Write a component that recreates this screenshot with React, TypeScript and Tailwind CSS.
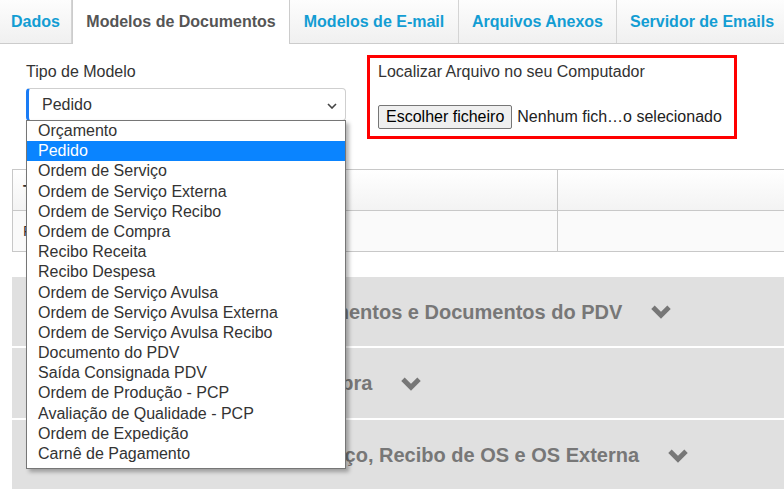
import React from 'react';

const tabs = [
    { label: 'Dados', w: 'w-[72px]', active: false },
    { label: 'Modelos de Documentos', w: 'w-[218px]', active: true },
    { label: 'Modelos de E-mail', w: 'w-[169px]', active: false },
    { label: 'Arquivos Anexos', w: 'w-[158px]', active: false },
    { label: 'Servidor de Emails', w: 'w-[170px]', active: false },
];

const opcoes = [
    'Orçamento',
    'Pedido',
    'Ordem de Serviço',
    'Ordem de Serviço Externa',
    'Ordem de Serviço Recibo',
    'Ordem de Compra',
    'Recibo Receita',
    'Recibo Despesa',
    'Ordem de Serviço Avulsa',
    'Ordem de Serviço Avulsa Externa',
    'Ordem de Serviço Avulsa Recibo',
    'Documento do PDV',
    'Saída Consignada PDV',
    'Ordem de Produção - PCP',
    'Avaliação de Qualidade - PCP',
    'Ordem de Expedição',
    'Carnê de Pagamento',
];

const secoes = [
    { titulo: 'Modelos de Orçamentos, Pagamentos e Documentos do PDV', h: 'h-[69px]' },
    { titulo: 'Modelos dos Recibos e de Compra', h: 'h-[70px]' },
    { titulo: 'Modelo para as Ordens de Serviço, Recibo de OS e OS Externa', h: 'h-[70px]' },
];

function Chevron({ className }: { className?: string }) {
    return (
        <svg viewBox="0 0 20 14" className={className} fill="none">
            <path d="M2.5 3 L10 10.5 L17.5 3" stroke="#777777" strokeWidth="4.5" strokeLinejoin="miter" />
        </svg>
    );
}

export default function App() {
    return (
        <div className="relative w-[784px] h-[489px] overflow-hidden bg-white text-[#333] font-['Liberation_Sans',Arial,sans-serif]">
            {/* Abas */}
            <div className="flex h-[44px] border-b border-[#cccccc] shadow-[inset_0_3px_3px_-2px_rgba(0,0,0,0.12)]">
                {tabs.map((t) => (
                    <div
                        key={t.label}
                        className={
                            t.active
                                ? `${t.w} shrink-0 flex items-center justify-center bg-white border-x border-[#cccccc] -mb-px text-[16px] font-bold text-[#555]`
                                : `${t.w} shrink-0 flex items-center justify-center bg-gradient-to-b from-[#fdfdfd] to-[#f0f0f0] border-r border-[#d4d4d4] last:border-r-0 text-[16px] font-bold text-[#139dd3]`
                        }
                    >
                        {t.label}
                    </div>
                ))}
            </div>

            <div className="pl-[12px]">
                {/* Linha superior */}
                <div className="flex items-start">
                    <div className="ml-[14px] w-[320px] pt-[18px]">
                        <div className="text-[16px] leading-[20px] text-[#333]">Tipo de Modelo</div>
                        <div className="relative mt-[6px] h-[33px] rounded-[4px] border border-[#cfcfcf] border-l-[3px] border-l-[#1a7cf5] flex items-center pl-[13px] text-[16px] text-[#333]">
                            Pedido
                            <svg viewBox="0 0 10 6" className="absolute right-[8px] top-[14px] w-[10px] h-[6px]" fill="none">
                                <path d="M1 1 L5 5 L9 1" stroke="#444" strokeWidth="1.6" />
                            </svg>
                        </div>
                    </div>
                    <div className="ml-[21px] mt-[11px] w-[370px] h-[84px] border-[3px] border-[#ff0000] pl-[8px] pt-[4px]">
                        <div className="text-[16px] leading-[20px] text-[#333]">Localizar Arquivo no seu Computador</div>
                        <div className="mt-[23px] flex items-center text-[16px]">
                            <div className="h-[24px] px-[7px] flex items-center bg-[#efefef] border border-[#767676] rounded-[2px] text-black">
                                Escolher ficheiro
                            </div>
                            <span className="ml-[5px] text-[#222]">Nenhum fich…o selecionado</span>
                        </div>
                    </div>
                </div>

                {/* Tabela */}
                <div className="mt-[30px] w-[790px] border border-[#c8c8c8] text-[15px]">
                    <div className="flex h-[41px] bg-gradient-to-b from-white to-[#f3f3f3] border-b border-[#c8c8c8]">
                        <div className="w-[545px] border-r border-[#c8c8c8] flex items-center pl-[10px] font-bold">Tipo</div>
                        <div className="flex-1" />
                    </div>
                    <div className="flex h-[40px] bg-[#fafafa]">
                        <div className="w-[545px] border-r border-[#c8c8c8] flex items-center pl-[10px]">Pedido</div>
                        <div className="flex-1" />
                    </div>
                </div>

                {/* Seções */}
                <div className="mt-[25px] flex flex-col gap-[2px]">
                    {secoes.map((s) => (
                        <div key={s.titulo} className={`${s.h} bg-[#e0e0e0] flex items-center pl-[28px] text-[20px] font-bold text-[#777]`}>
                            {s.titulo}
                            <Chevron className="ml-[28px] w-[22px] h-[15px]" />
                        </div>
                    ))}
                </div>
            </div>

            {/* Lista aberta do select */}
            <div className="absolute left-[26px] top-[120px] w-[320px] bg-white border border-[#767676] pb-[4px] shadow-[3px_3px_4px_rgba(0,0,0,0.3)]">
                {opcoes.map((o) => (
                    <div
                        key={o}
                        className={
                            o === 'Pedido'
                                ? 'h-[20.2px] leading-[20px] pl-[11px] text-[16px] bg-[#0a84ff] text-white'
                                : 'h-[20.2px] leading-[20px] pl-[11px] text-[16px] text-[#333]'
                        }
                    >
                        {o}
                    </div>
                ))}
            </div>
        </div>
    );
}
